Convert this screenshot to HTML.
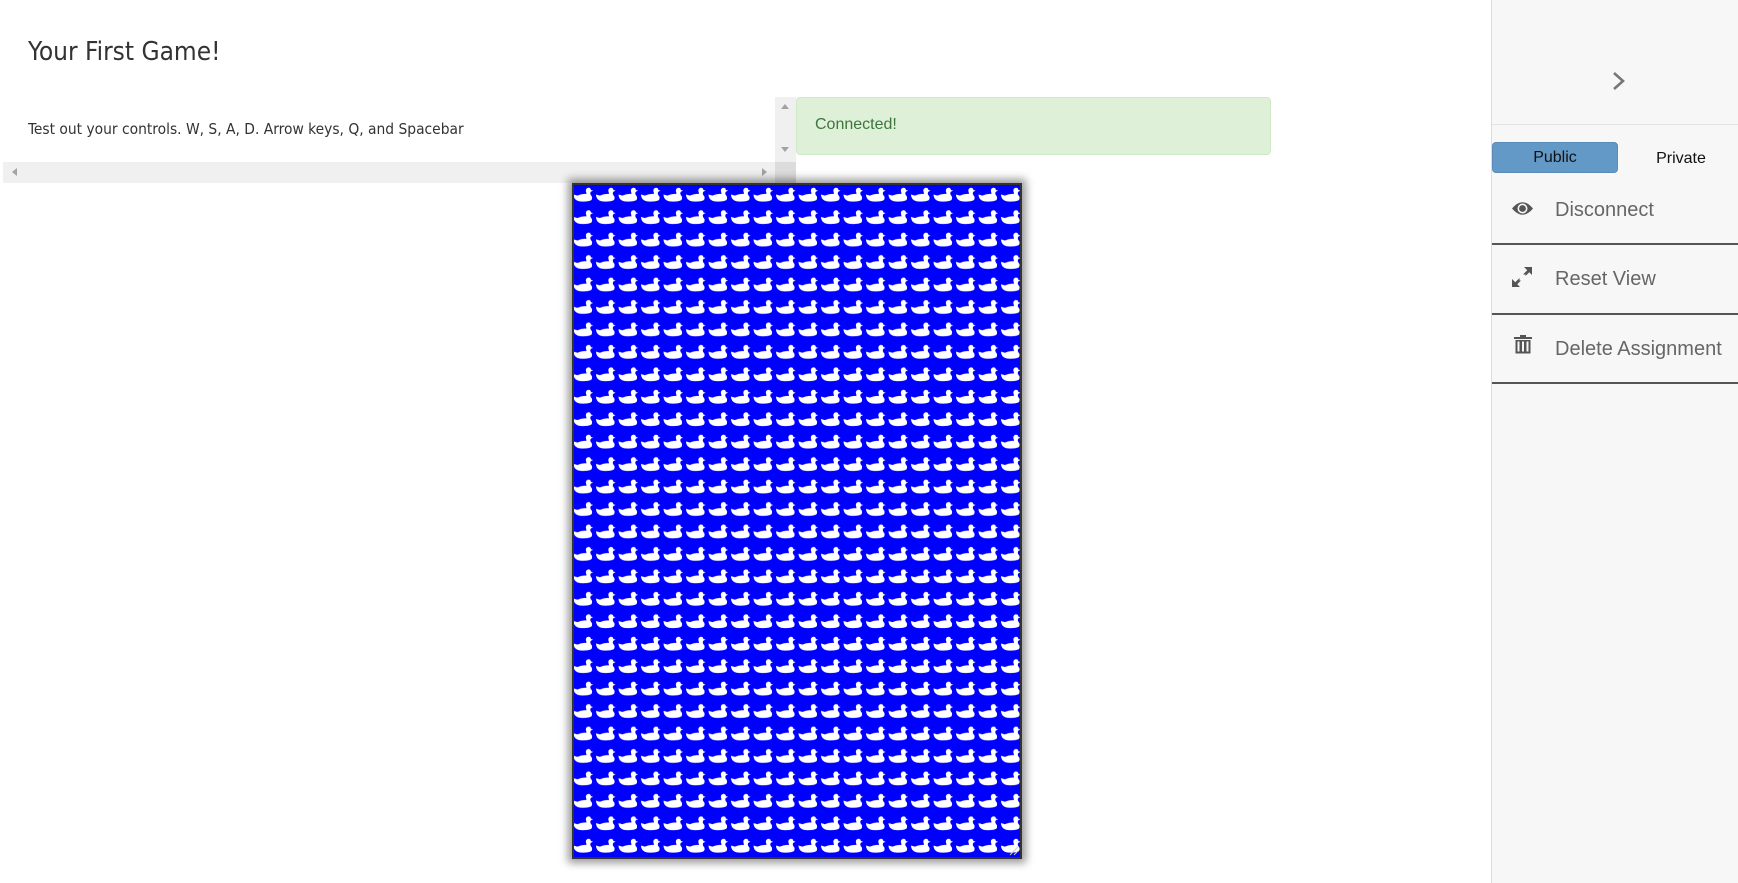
<!DOCTYPE html>
<html><head><meta charset="utf-8"><style>
*{margin:0;padding:0;box-sizing:border-box}
body{width:1738px;height:883px;background:#fff;position:relative;overflow:hidden;font-family:"Liberation Sans",Arial,sans-serif}
.abs{position:absolute}
.narrow{font-family:"Liberation Sans Narrow","DejaVu Sans Condensed","Liberation Sans",sans-serif}
</style></head><body>
<div class="abs narrow" style="left:28px;top:37px;font-size:26px;color:#333;white-space:nowrap">Your First Game!</div>
<div class="abs narrow" style="left:28px;top:120px;font-size:15.4px;color:#333;white-space:nowrap">Test out your controls. W, S, A, D. Arrow keys, Q, and Spacebar</div>
<!-- vertical scrollbar -->
<div class="abs" style="left:775px;top:97px;width:21px;height:65px;background:#f0f0f0"></div>
<div class="abs" style="left:781px;top:104px;width:0;height:0;border-left:4px solid transparent;border-right:4px solid transparent;border-bottom:5px solid #a3a3a3"></div>
<div class="abs" style="left:781px;top:147px;width:0;height:0;border-left:4px solid transparent;border-right:4px solid transparent;border-top:5px solid #a3a3a3"></div>
<!-- horizontal scrollbar -->
<div class="abs" style="left:3px;top:162px;width:772px;height:21px;background:#f0f0f0"></div>
<div class="abs" style="left:775px;top:162px;width:21px;height:21px;background:#dcdcdc"></div>
<div class="abs" style="left:12px;top:168px;width:0;height:0;border-top:4px solid transparent;border-bottom:4px solid transparent;border-right:5px solid #a3a3a3"></div>
<div class="abs" style="left:762px;top:168px;width:0;height:0;border-top:4px solid transparent;border-bottom:4px solid transparent;border-left:5px solid #a3a3a3"></div>
<!-- alert -->
<div class="abs" style="left:796px;top:97px;width:475px;height:58px;background:#dff0d8;border:1px solid #d0e9c6;border-radius:4px"></div>
<div class="abs" style="left:815px;top:116px;font-size:16px;color:#3c763d">Connected!</div>
<!-- canvas -->
<div class="abs" style="left:572px;top:183px;width:450px;height:676px;box-shadow:0 0 8px 4px rgba(0,0,0,.4);border:2px solid #333;background:#0000ff">
<svg width="446" height="672" style="display:block">
<defs><pattern id="d" x="-1" y="-1" width="22.5" height="22.45" patternUnits="userSpaceOnUse">
<g fill="#fff" transform="translate(10 10.5) scale(1.12) translate(-10 -10.5)">
<path d="M1.5 10.5 L5 11.5 Q9 9.5 13 10 L13 9 Q11.5 5.5 14.5 4.5 Q17 4.5 17 6.5 L19 7 L17 8 Q16 9.5 17 11 Q19 13 17.5 15.5 Q15 17 9 16.8 Q4 16.5 2.5 14 Q1.5 12.5 1.5 10.5Z"/>
</g></pattern></defs>
<rect width="446" height="672" fill="url(#d)"/>
<path d="M436 670 L444 662 M440 670 L444 666" stroke="#ccc" stroke-width="1"/>
</svg></div>
<!-- sidebar -->
<div class="abs" style="left:1491px;top:0;width:247px;height:883px;background:#f7f7f7;border-left:1px solid #ddd"></div>
<svg class="abs" style="left:1610px;top:70px" width="20" height="22"><path d="M4 3 L13 11 L4 19" fill="none" stroke="#777" stroke-width="2.6"/></svg>
<div class="abs" style="left:1492px;top:124px;width:246px;height:1px;background:#e3e3e3"></div>
<div class="abs" style="left:1492px;top:142px;width:126px;height:31px;background:#6399c6;border-radius:4px;border:1px solid #5a8bb8;text-align:center;line-height:30px;font-size:16px;color:#111">Public</div>
<div class="abs" style="left:1618px;top:143px;width:126px;height:31px;text-align:center;line-height:31px;font-size:16px;color:#111">Private</div>
<svg class="abs" style="left:1511px;top:200px" width="23" height="17"><path d="M1 8.5 Q11.5 -4 22 8.5 Q11.5 21 1 8.5Z" fill="#555"/><circle cx="11.5" cy="8.5" r="5" fill="#f7f7f7"/><circle cx="11.5" cy="8.5" r="3.4" fill="#555"/></svg>
<div class="abs" style="left:1555px;top:199px;font-size:20px;color:#666">Disconnect</div>
<div class="abs" style="left:1492px;top:243px;width:246px;height:2px;background:#555"></div>
<svg class="abs" style="left:1512px;top:267px" width="21" height="21"><g fill="#555"><path d="M20 0 L20 8 L12 0Z"/><path d="M0 20 L0 12 L8 20Z"/><path d="M16 2.5 L18 4.5 L4.5 18 L2.5 16Z" /></g><rect x="7.5" y="7.5" width="6" height="6" fill="#f7f7f7"/></svg>
<div class="abs" style="left:1555px;top:268px;font-size:20px;color:#666">Reset View</div>
<div class="abs" style="left:1492px;top:313px;width:246px;height:2px;background:#555"></div>
<svg class="abs" style="left:1514px;top:335px" width="18" height="19"><g fill="#555"><rect x="6" y="0" width="6" height="2"/><rect x="0" y="2" width="18" height="2"/><path d="M1.5 5 H16.5 V18.5 H1.5Z"/></g><g fill="#f7f7f7"><rect x="3.5" y="6.5" width="2" height="10"/><rect x="8" y="6.5" width="2" height="10"/><rect x="12.5" y="6.5" width="2" height="10"/></g></svg>
<div class="abs" style="left:1555px;top:338px;font-size:20px;color:#666">Delete Assignment</div>
<div class="abs" style="left:1492px;top:382px;width:246px;height:2px;background:#555"></div>
</body></html>
